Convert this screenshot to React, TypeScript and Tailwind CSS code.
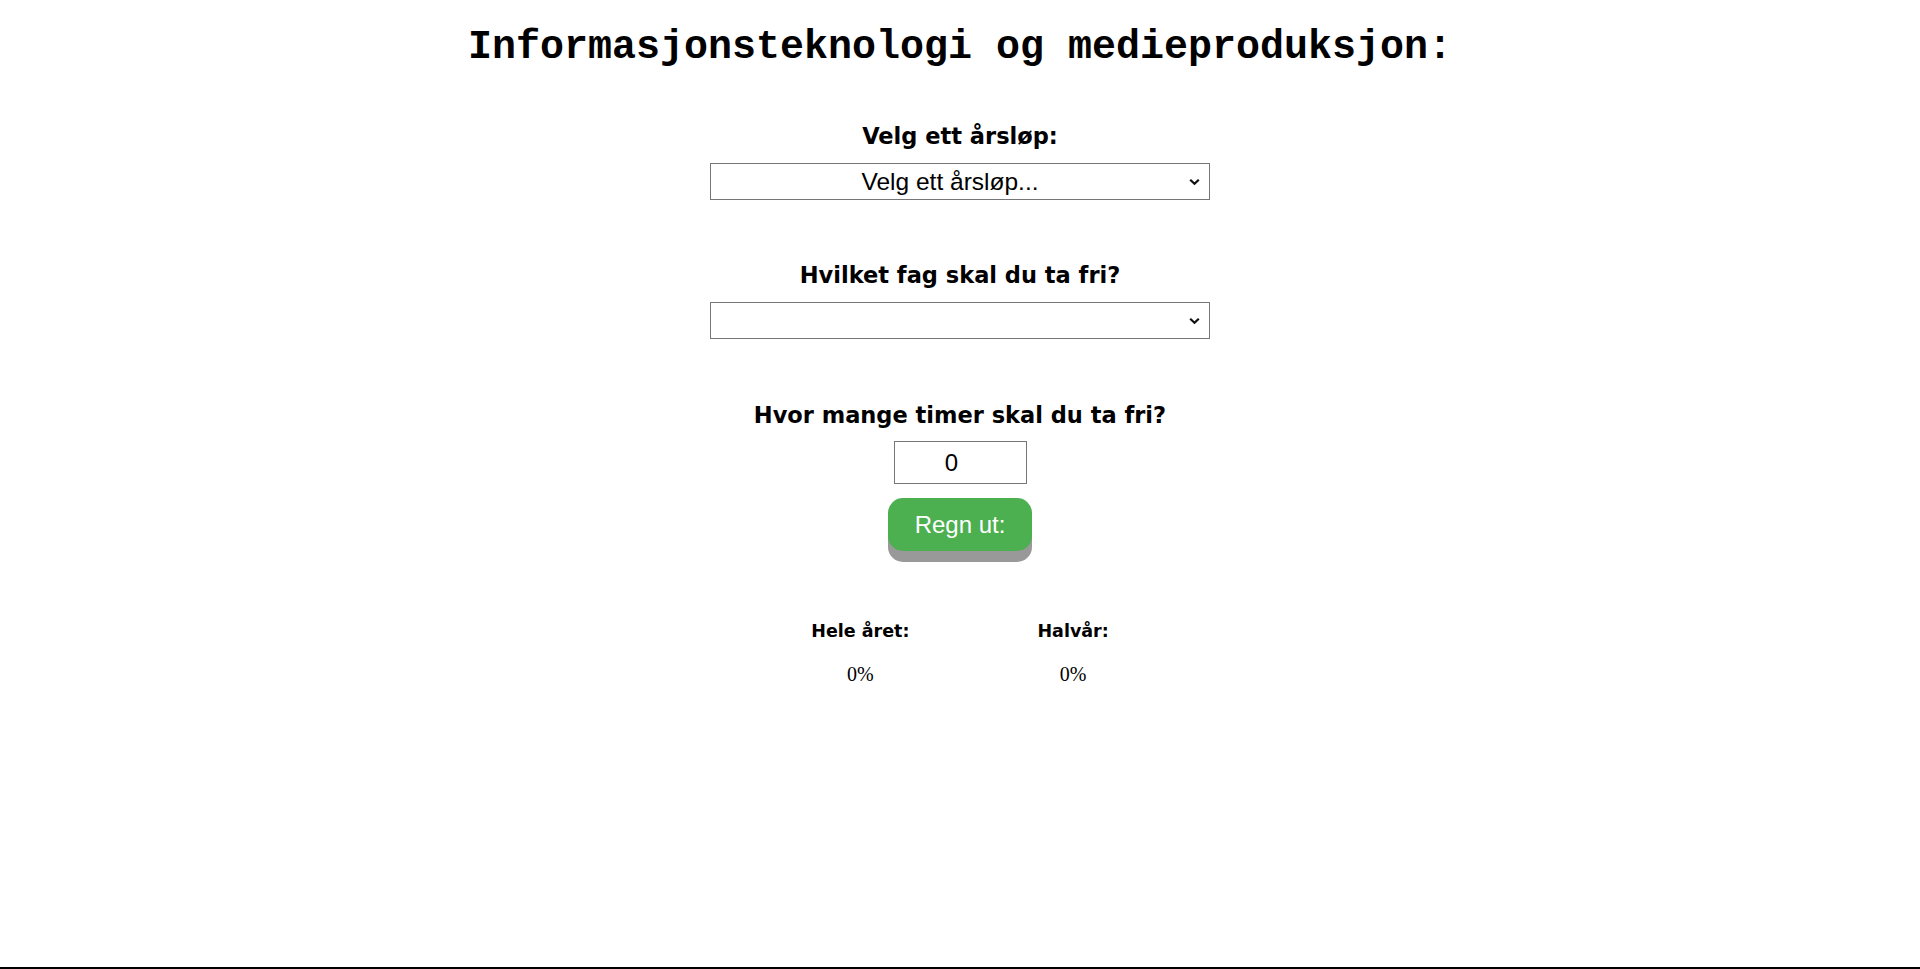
import React from 'react';

const labelCls =
  "font-['DejaVu_Sans',sans-serif] font-bold text-[22.5px] leading-[26px] text-black text-center";

const Chevron: React.FC = () => (
  <svg
    className="absolute right-[10px] top-1/2 -translate-y-1/2 pointer-events-none"
    width="11"
    height="7"
    viewBox="0 0 11 7"
    fill="none"
  >
    <path d="M1.2 1.2L5.5 5.3L9.8 1.2" stroke="#111" strokeWidth="2.2" />
  </svg>
);

export default function App() {
  return (
    <div className="h-screen flex flex-col bg-white text-black overflow-hidden">
      <main className="flex-1 flex flex-col items-center">
        <h1 className="mt-[28px] font-['Liberation_Mono',monospace] font-bold text-[40px] leading-[40px]">
          Informasjonsteknologi og medieproduksjon:
        </h1>

        {/* årsløp */}
        <label className={`${labelCls} mt-[55px]`}>Velg ett årsløp:</label>
        <div className="relative mt-[14px] w-[500px]">
          <select
            defaultValue=""
            className="appearance-none w-full h-[37px] pr-[20px] border border-[#767676] bg-white font-['Liberation_Sans',Arial,sans-serif] text-[24.5px] leading-[27px] text-center [text-align-last:center] outline-none"
          >
            <option value="">Velg ett årsløp...</option>
            <option value="vg1">Vg1</option>
            <option value="vg2">Vg2</option>
          </select>
          <Chevron />
        </div>

        {/* fag */}
        <label className={`${labelCls} mt-[62px]`}>Hvilket fag skal du ta fri?</label>
        <div className="relative mt-[14px] w-[500px]">
          <select
            defaultValue=""
            className="appearance-none w-full h-[37px] pr-[20px] border border-[#767676] bg-white font-['Liberation_Sans',Arial,sans-serif] text-[24.5px] leading-[27px] text-center outline-none"
          >
            <option value=""></option>
          </select>
          <Chevron />
        </div>

        {/* timer */}
        <label className={`${labelCls} mt-[63px]`}>Hvor mange timer skal du ta fri?</label>
        <input
          type="number"
          defaultValue={0}
          className="mt-[13px] w-[133px] h-[43px] pl-[1px] pr-[3px] border border-[#767676] bg-white text-center font-['Liberation_Sans',Arial,sans-serif] text-[24px] outline-none"
        />

        <button className="mt-[14px] w-[144px] h-[53px] rounded-[15px] bg-[#4caf50] text-white font-['Liberation_Sans',Arial,sans-serif] text-[24px] shadow-[0_11px_#999]">
          Regn ut:
        </button>

        {/* resultat */}
        <div className="mt-[70px] flex">
          <div className="px-16 flex flex-col items-center">
            <span className="font-['DejaVu_Sans',sans-serif] font-bold text-[17.5px] leading-[20px]">Hele året:</span>
            <span className="mt-[21px] font-['Liberation_Serif',serif] text-[20px] leading-[24px]">0%</span>
          </div>
          <div className="px-16 flex flex-col items-center">
            <span className="font-['DejaVu_Sans',sans-serif] font-bold text-[17.5px] leading-[20px]">Halvår:</span>
            <span className="mt-[21px] font-['Liberation_Serif',serif] text-[20px] leading-[24px]">0%</span>
          </div>
        </div>
      </main>
      <footer className="h-[2px] bg-black" />
    </div>
  );
}
